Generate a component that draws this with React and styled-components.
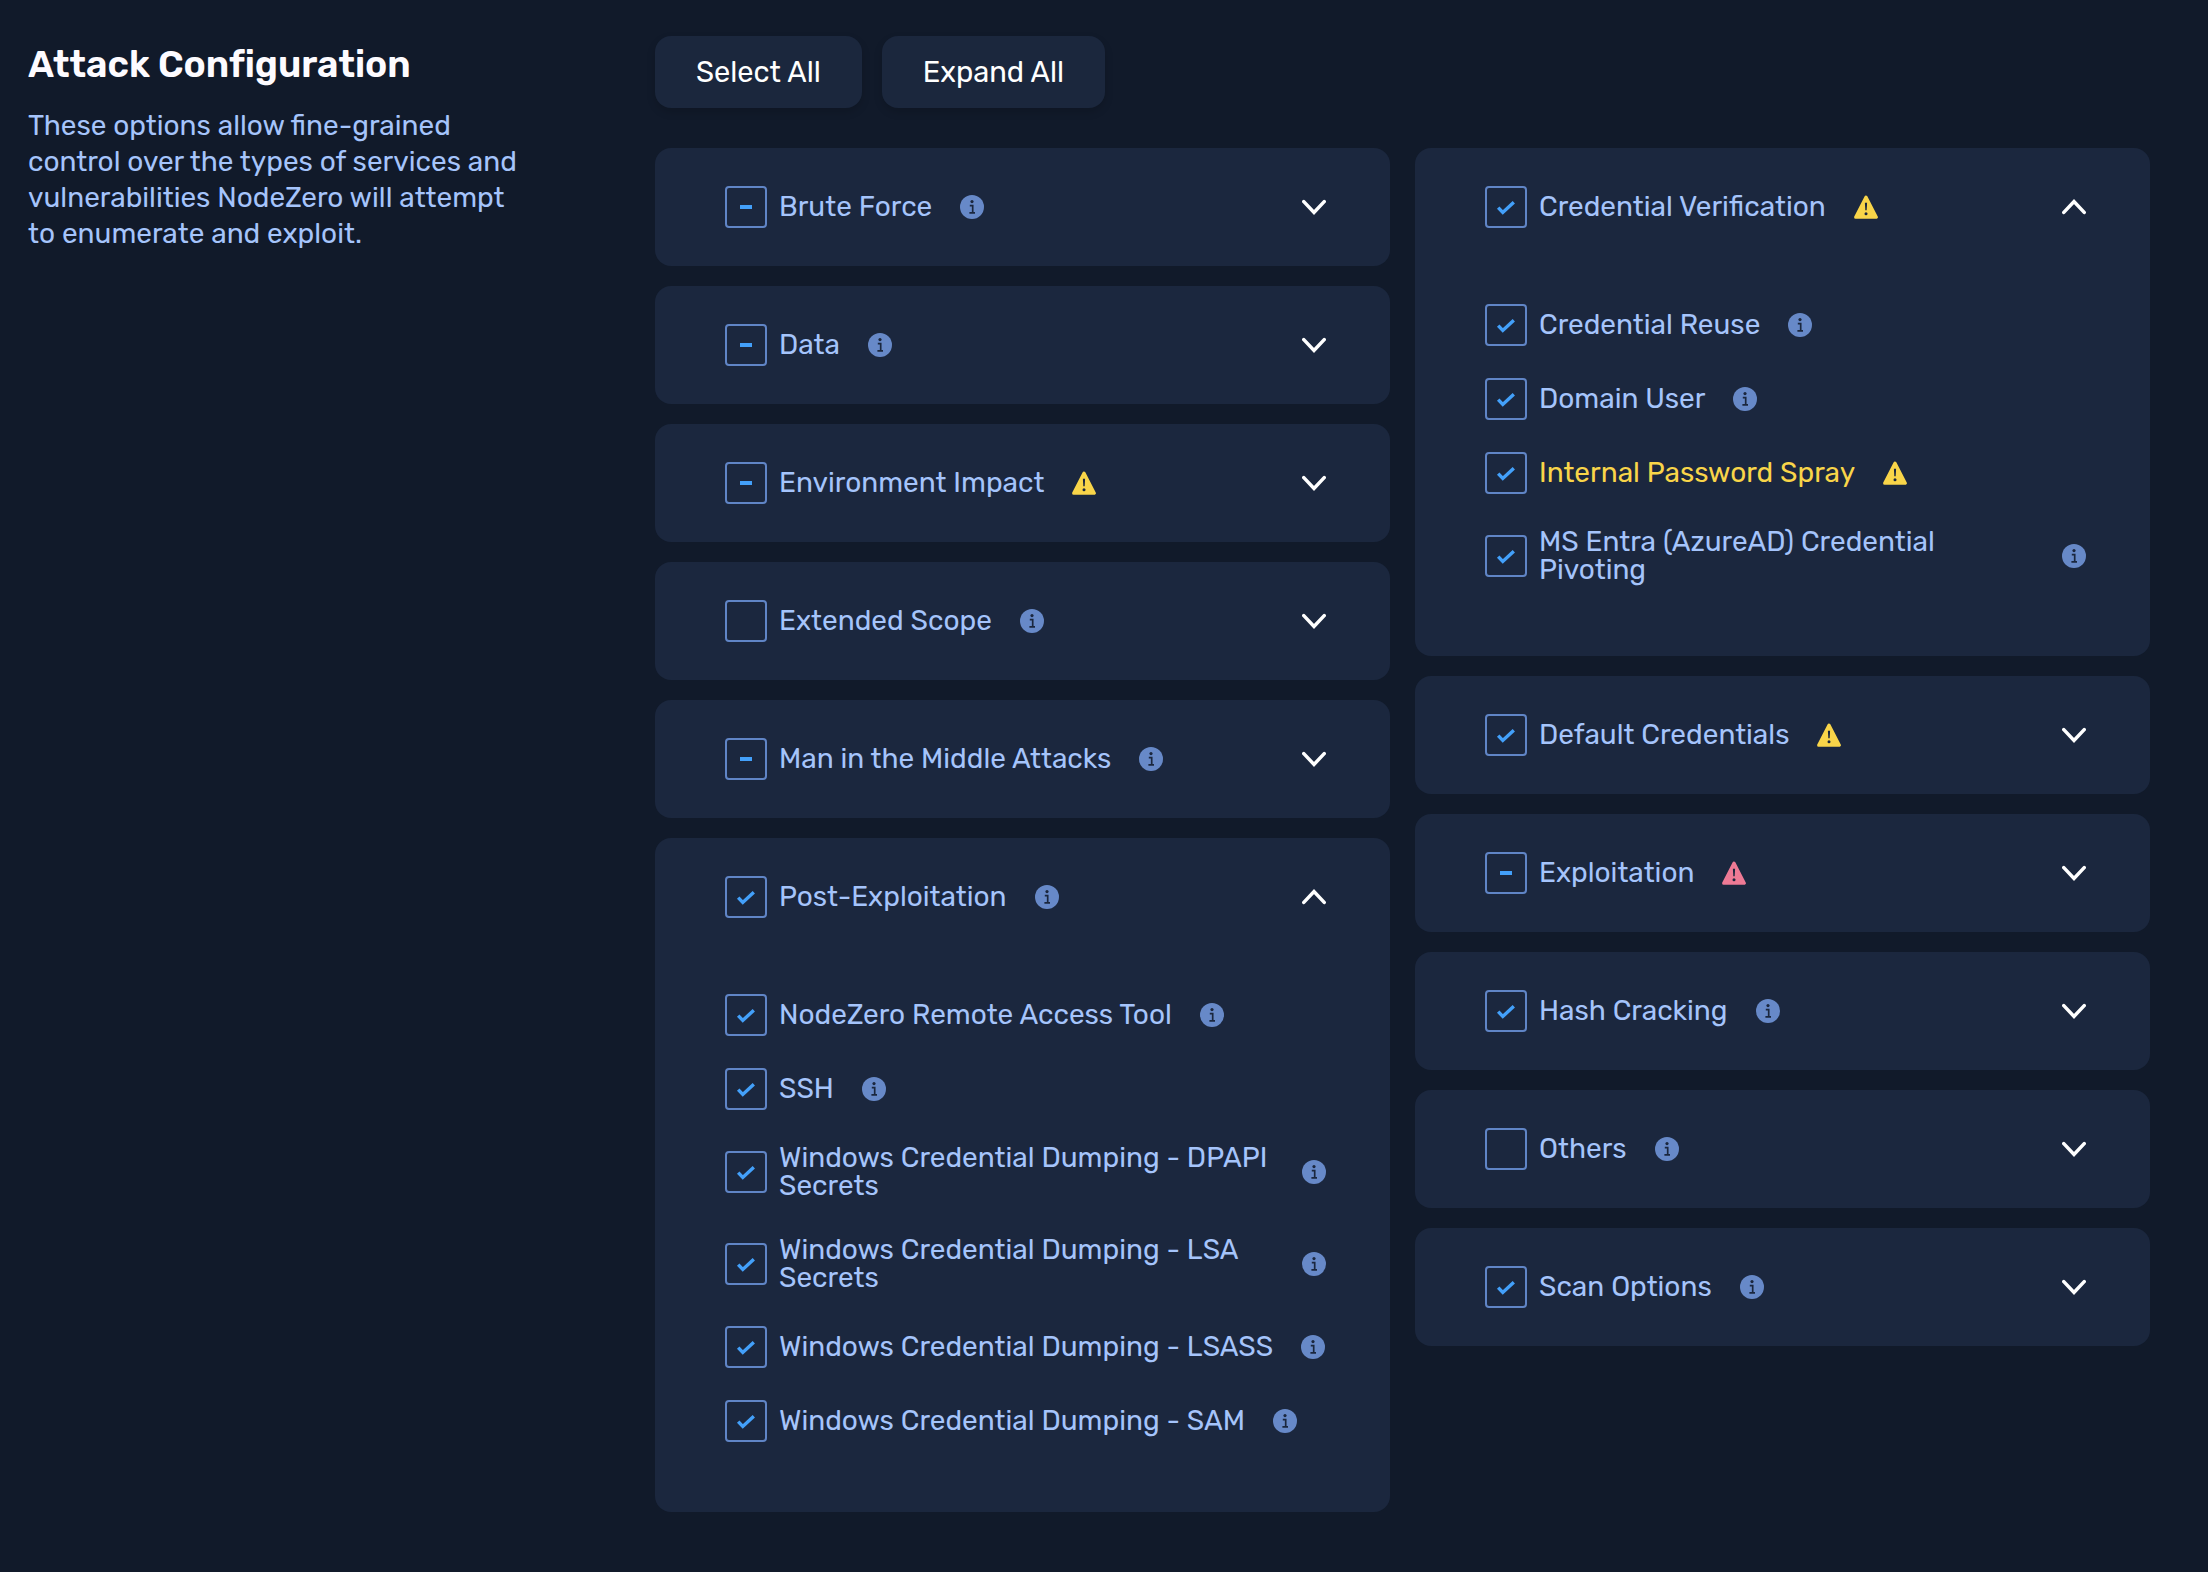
import React, { useEffect, useRef, useState } from "react";
import styled, { createGlobalStyle } from "styled-components";

// Option groups, split over the two columns of the page
const leftGroups = [
  { name: "Brute Force", state: "some", icon: "info" },
  { name: "Data", state: "some", icon: "info" },
  { name: "Environment Impact", state: "some", icon: "warning" },
  { name: "Extended Scope", state: "none", icon: "info" },
  { name: "Man in the Middle Attacks", state: "some", icon: "info" },
  {
    name: "Post-Exploitation",
    state: "all",
    icon: "info",
    open: true,
    options: [
      { name: "NodeZero Remote Access Tool", icon: "info" },
      { name: "SSH", icon: "info" },
      { name: "Windows Credential Dumping - DPAPI Secrets", icon: "info" },
      { name: "Windows Credential Dumping - LSA Secrets", icon: "info" },
      { name: "Windows Credential Dumping - LSASS", icon: "info" },
      { name: "Windows Credential Dumping - SAM", icon: "info" },
    ],
  },
];

const rightGroups = [
  {
    name: "Credential Verification",
    state: "all",
    icon: "warning",
    open: true,
    options: [
      { name: "Credential Reuse", icon: "info" },
      { name: "Domain User", icon: "info" },
      { name: "Internal Password Spray", icon: "warning", highlight: true },
      { name: "MS Entra (AzureAD) Credential Pivoting", icon: "info" },
    ],
  },
  { name: "Default Credentials", state: "all", icon: "warning" },
  { name: "Exploitation", state: "some", icon: "danger" },
  { name: "Hash Cracking", state: "all", icon: "info" },
  { name: "Others", state: "none", icon: "info" },
  { name: "Scan Options", state: "all", icon: "info" },
];

// Small status icon shown after each label
const StatusIcon = ({ type }) => {
  if (type === "info") {
    return (
      <Icon viewBox="0 0 24 24" aria-hidden="true">
        <circle cx="12" cy="12" r="12" fill="#6789c8" />
        <circle cx="12" cy="6.6" r="1.6" fill="#1b273e" />
        <path d="M9.8 10.6h2.9v6.6M9.4 17.8h5.6" fill="none" stroke="#1b273e" strokeWidth="1.7" />
      </Icon>
    );
  }
  return (
    <Icon viewBox="0 0 24 24" aria-hidden="true">
      <path
        d="M12 2 22.4 22.2H1.6Z"
        fill={type === "danger" ? "#ee7a95" : "#f9d549"}
        stroke={type === "danger" ? "#ee7a95" : "#f9d549"}
        strokeWidth="3"
        strokeLinejoin="round"
      />
      <path d="M10.9 7.8h2.2l-.4 7.4h-1.4Z" fill="#1b273e" />
      <circle cx="12" cy="18.7" r="1.5" fill="#1b273e" />
    </Icon>
  );
};

// Checkbox with a third, partly selected state
const Checkbox = ({ label, initial, highlight }) => {
  const [state, setState] = useState(initial);
  const input = useRef(null);

  useEffect(() => {
    input.current.indeterminate = state === "some";
  }, [state]);

  return (
    <CheckLabel $highlight={highlight}>
      <BoxWrap>
        <Box
          ref={input}
          type="checkbox"
          checked={state === "all"}
          onChange={() => setState(state === "all" ? "none" : "all")}
        />
        <Mark viewBox="0 0 42 42" aria-hidden="true">
          {state === "some" && <path d="M15 21h12" strokeWidth="4" />}
          {state === "all" && <path d="M13.2 21.6 17.8 26.4 28.8 16.2" strokeWidth="3.4" />}
        </Mark>
      </BoxWrap>
      <span>{label}</span>
    </CheckLabel>
  );
};

// Card for one group, opens to show its options
const Group = ({ group }) => {
  const [open, setOpen] = useState(Boolean(group.open));
  return (
    <Card>
      <CardHeader>
        <Checkbox label={group.name} initial={group.state} />
        <StatusIcon type={group.icon} />
        <Toggle
          type="button"
          aria-label={"Toggle " + group.name}
          aria-expanded={open}
          onClick={() => setOpen(!open)}
        >
          <Chevron viewBox="0 0 24 24" aria-hidden="true">
            <path d={open ? "M1.8 17.4 12 6.6 22.2 17.4" : "M1.8 6.6 12 17.4 22.2 6.6"} />
          </Chevron>
        </Toggle>
      </CardHeader>
      {open && group.options && (
        <Options>
          {group.options.map((option) => (
            <OptionRow key={option.name}>
              <Checkbox label={option.name} initial="all" highlight={option.highlight} />
              <StatusIcon type={option.icon} />
            </OptionRow>
          ))}
        </Options>
      )}
    </Card>
  );
};

export default function App() {
  return (
    <Page>
      <GlobalStyle />
      <Intro>
        <Title>Attack Configuration</Title>
        <Description>
          These options allow fine-grained control over the types of services
          and vulnerabilities NodeZero will attempt to enumerate and exploit.
        </Description>
      </Intro>
      <Main>
        <Actions>
          <ActionButton type="button">Select All</ActionButton>
          <ActionButton type="button">Expand All</ActionButton>
        </Actions>
        <Columns>
          <Column>
            {leftGroups.map((group) => (
              <Group key={group.name} group={group} />
            ))}
          </Column>
          <Column>
            {rightGroups.map((group) => (
              <Group key={group.name} group={group} />
            ))}
          </Column>
        </Columns>
      </Main>
    </Page>
  );
}

// Styled Components
const GlobalStyle = createGlobalStyle`
  * {
    box-sizing: border-box;
  }
  body {
    margin: 0;
    background: #111a2a;
    color: #a5c4fb;
    font-family: Rubik, Roboto, sans-serif;
    font-size: 28px;
  }
`;

const Page = styled.div`
  display: flex;
  gap: 28px;
  min-height: 100vh;
  padding: 36px 58px 60px 28px;
`;

const Intro = styled.header`
  flex: 0 0 599px;
`;

const Title = styled.h1`
  margin: 6px 0 22px;
  color: #fdfbff;
  font-size: 37px;
  font-weight: 600;
  font-variant-ligatures: none;
  line-height: 44px;
`;

const Description = styled.p`
  max-width: 500px;
  margin: 0;
  line-height: 36px;
`;

const Main = styled.main`
  flex: 1;
  min-width: 0;
`;

const Actions = styled.div`
  display: flex;
  gap: 20px;
  margin-bottom: 40px;
`;

const ActionButton = styled.button`
  height: 72px;
  padding: 0 41px;
  border: 0;
  border-radius: 16px;
  background: #1b273d;
  box-shadow: 0 4px 8px rgba(0, 0, 0, 0.15);
  color: #fff;
  font-family: inherit;
  font-size: 29px;
  font-weight: 400;
  cursor: pointer;
`;

const Columns = styled.div`
  display: grid;
  grid-template-columns: repeat(2, minmax(0, 1fr));
  align-items: start;
  gap: 25px;
`;

const Column = styled.div`
  display: flex;
  flex-direction: column;
  gap: 20px;
`;

const Card = styled.section`
  padding: 0 64px 0 70px;
  border-radius: 16px;
  background: #1b273e;
`;

const CardHeader = styled.div`
  display: flex;
  align-items: center;
  gap: 28px;
  height: 118px;
`;

const Options = styled.div`
  padding: 22px 0 54px;
`;

const OptionRow = styled.div`
  display: flex;
  align-items: center;
  gap: 28px;
  min-height: 74px;
`;

const CheckLabel = styled.label`
  display: flex;
  align-items: center;
  gap: 12px;
  color: ${(props) => (props.$highlight ? "#f9d549" : "#a5c4fb")};
  line-height: 28px;
  cursor: pointer;
  & > span:last-child {
    padding: 18px 0;
  }
`;

const BoxWrap = styled.span`
  display: grid;
  flex: 0 0 42px;
  height: 42px;
`;

const Box = styled.input`
  grid-area: 1 / 1;
  width: 42px;
  height: 42px;
  margin: 0;
  appearance: none;
  border: 2px solid #6085c6;
  border-radius: 4px;
  cursor: pointer;
`;

const Mark = styled.svg`
  grid-area: 1 / 1;
  width: 42px;
  height: 42px;
  fill: none;
  stroke: #43a0fa;
  pointer-events: none;
`;

const Icon = styled.svg`
  flex: 0 0 24px;
  width: 24px;
  height: 24px;
`;

const Toggle = styled.button`
  display: flex;
  margin-left: auto;
  padding: 0;
  border: 0;
  background: none;
  cursor: pointer;
`;

const Chevron = styled.svg`
  width: 24px;
  height: 24px;
  fill: none;
  stroke: #fff;
  stroke-width: 3.5;
  stroke-linecap: round;
`;
